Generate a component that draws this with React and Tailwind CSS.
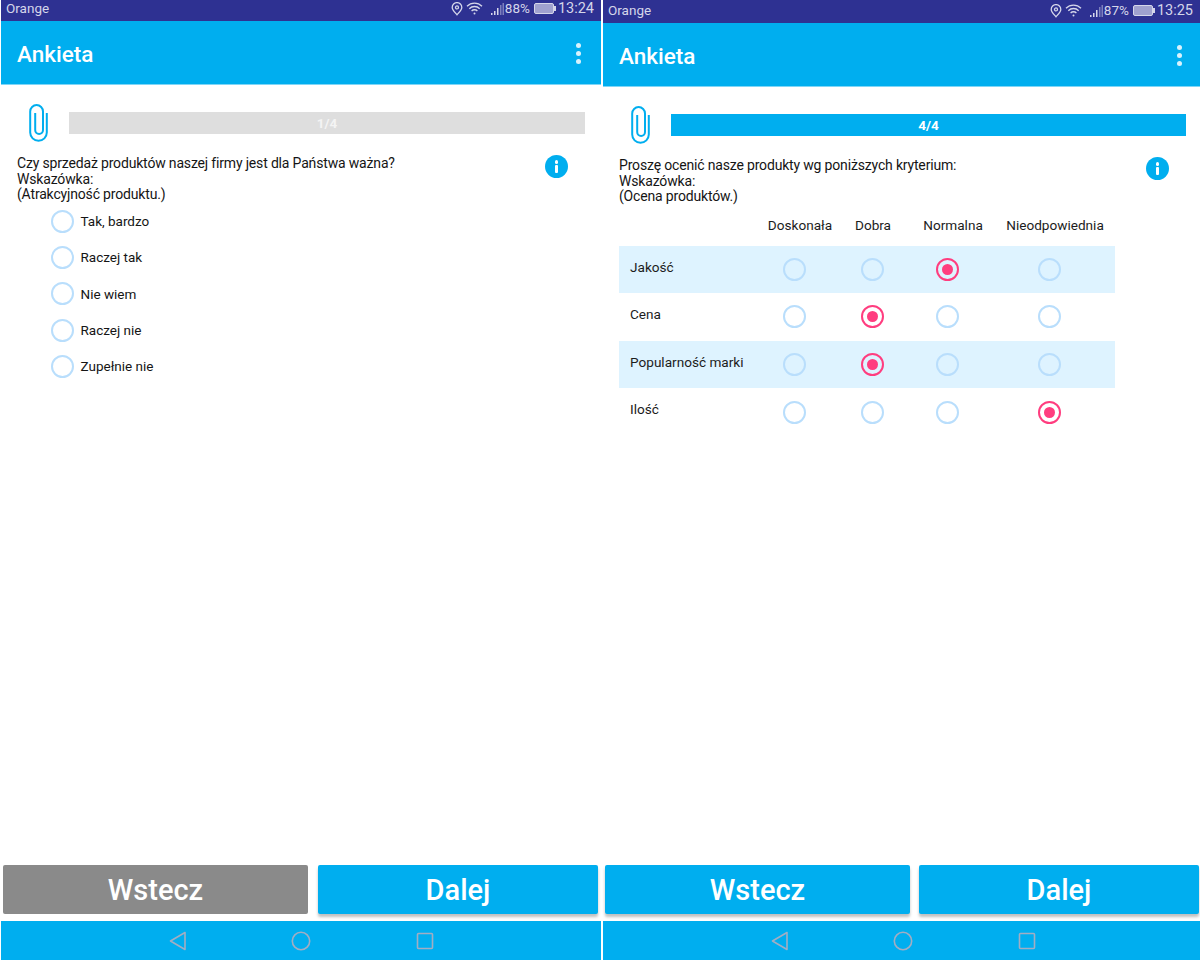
const font = { fontFamily: "Roboto, sans-serif" }

function Clip() {
  return (
    <svg width="19" height="38" viewBox="0 0 19 38" fill="none" stroke="#00aeef" strokeWidth="2" className="shrink-0">
      <path d="M17.8 9V28.5a8.3 8.3 0 0 1-16.6 0V7.5a6.4 6.4 0 0 1 12.8 0V26a3.9 3.9 0 0 1-7.8 0V9" />
    </svg>
  )
}

function Info() {
  return (
    <div className="w-[23px] h-[23px] -mt-px rounded-full bg-[#00aeef] flex flex-col items-center justify-center gap-[1.5px] shrink-0">
      <div className="w-[3.5px] h-[3.5px] rounded-full bg-white"></div>
      <div className="w-[3.5px] h-[8px] rounded-[1px] bg-white"></div>
    </div>
  )
}

function Radio({ on }) {
  if (on) {
    return (
      <div className="w-[23px] h-[23px] rounded-full border-[2.5px] border-[#ff3d7f] flex items-center justify-center">
        <div className="w-[11px] h-[11px] rounded-full bg-[#ff3d7f]"></div>
      </div>
    )
  }
  return <div className="w-[23px] h-[23px] rounded-full border-[2px] border-[#b9defc]"></div>
}

function StatusIcons() {
  return (
    <div className="flex items-center">
      <svg width="12" height="14" viewBox="0 0 12 14" fill="none" stroke="#d5d6ea" strokeWidth="1.3">
        <path d="M6 12.8C3.6 10 1.2 7.8 1.2 5.4a4.8 4.8 0 0 1 9.6 0C10.800 7.800 8.400 10 6 12.800Z" />
        <circle cx="6" cy="5.400" r="1.500" />
      </svg>
      <svg width="17" height="13" viewBox="0 0 17 13" fill="none" stroke="#d5d6ea" strokeWidth="1.3" className="ml-[3px]">
        <path d="M1 4.300a10.500 10.500 0 0 1 15 0M3.300 6.700a7.200 7.200 0 0 1 10.400 0M5.600 9a4 4 0 0 1 5.800 0" />
        <circle cx="8.500" cy="11.500" r="1" fill="#d5d6ea" stroke="none" />
      </svg>
      <svg width="13" height="12" viewBox="0 0 13 12" className="ml-[8px]">
        <rect x="0" y="10" width="1.500" height="2" fill="#d5d6ea" />
        <rect x="3" y="8" width="1.500" height="4" fill="#d5d6ea" />
        <rect x="6" y="5" width="1.500" height="7" fill="#d5d6ea" />
        <rect x="9" y="2" width="1.500" height="10" fill="#7d80bd" />
        <rect x="11.500" y="0" width="1.500" height="12" fill="#7d80bd" />
      </svg>
    </div>
  )
}

function Battery() {
  return (
    <div className="flex items-center ml-[4px]">
      <div className="w-[20px] h-[11px] rounded-[2px] border border-[#d5d6ea] bg-[#9fa1cf]"></div>
      <div className="w-[2px] h-[5px] bg-[#d5d6ea]"></div>
    </div>
  )
}

function NavBar() {
  return (
    <div className="h-[39px] bg-[#00aeef] flex items-center pl-[167px]">
      <svg width="20" height="22" viewBox="0 0 20 22" fill="none" stroke="#a3adc2" strokeWidth="1.600">
        <path d="M17 2.500V19.500L2.500 11Z" strokeLinejoin="round" />
      </svg>
      <svg width="20" height="20" viewBox="0 0 20 20" fill="none" stroke="#a3adc2" strokeWidth="1.600" className="ml-[103px]">
        <circle cx="10" cy="10" r="8.700" />
      </svg>
      <svg width="18" height="18" viewBox="0 0 18 18" fill="none" stroke="#a3adc2" strokeWidth="1.600" className="ml-[105px]">
        <rect x="1.500" y="1.500" width="15" height="15" rx="1" />
      </svg>
    </div>
  )
}

function Phone({ className, statusClass, barRightClass, infoClass, percent, time, step, barClass, barTextClass, question, hint, backClass, footClass, children }) {
  return (
    <div className={"flex flex-col h-[960px] bg-white " + className} style={font}>
      <div className={"bg-[#2e3192] flex items-center justify-between text-[13.5px] text-[#d5d6ea] pl-[5px] pr-[7px] " + statusClass}>
        <span>Orange</span>
        <div className="flex items-center">
          <StatusIcons />
          <span className="ml-[1px]">{percent}</span>
          <Battery />
          <span className="ml-[2px] text-[14.500px]">{time}</span>
        </div>
      </div>
      <div className={"h-[64px] bg-[#00aeef] flex items-center justify-between pl-4 border-b border-[#7fd6f7] " + barRightClass}>
        <span className="text-[22.500px] font-medium text-white pt-[5px]">Ankieta</span>
        <div className="flex flex-col gap-[3px] pt-[1px]">
          <div className="w-[5px] h-[5px] rounded-full bg-[#d8f2fc]"></div>
          <div className="w-[5px] h-[5px] rounded-full bg-[#d8f2fc]"></div>
          <div className="w-[5px] h-[5px] rounded-full bg-[#d8f2fc]"></div>
        </div>
      </div>
      <div className="flex-1">
        <div className="flex items-start pt-[19px] pl-7">
          <Clip />
          <div className={"ml-[21px] mt-2 h-[22px] flex items-center justify-center text-[13.500px] font-bold text-white pt-[1px] " + barClass}>
            <span className={barTextClass}>{step}</span>
          </div>
        </div>
        <div className={"flex justify-between pl-4 mt-[14px] " + infoClass}>
          <div className="text-[14px] leading-[15.500px] tracking-[-0.17px] text-[#151515]">
            <div>{question}</div>
            <div>Wskazówka:</div>
            <div>{hint}</div>
          </div>
          <Info />
        </div>
        {children}
      </div>
      <div className={"flex h-[49px] mb-[7px] pl-[2px] " + footClass}>
        <button className={"w-[305px] rounded-[2px] text-[29px] font-medium text-white pt-[3px] " + backClass}>Wstecz</button>
        <button className="flex-1 rounded-[2px] bg-[#00aeef] text-[29px] font-medium text-white pt-[3px] shadow-[0_3px_3px_rgba(0,0,0,0.25)]">Dalej</button>
      </div>
      <NavBar />
    </div>
  )
}

const options = ["Tak, bardzo", "Raczej tak", "Nie wiem", "Raczej nie", "Zupełnie nie"]

const rows = [
  { name: "Jakość", pick: 2, bg: "bg-[#def3ff]" },
  { name: "Cena", pick: 1, bg: "bg-white" },
  { name: "Popularność marki", pick: 1, bg: "bg-[#def3ff]" },
  { name: "Ilość", pick: 3, bg: "bg-white" },
]

export default function App() {
  return (
    <div className="flex w-[1200px] h-[960px] bg-white overflow-hidden">
      <Phone
        className="w-[600px] ml-px"
        statusClass="h-[21px] pb-1"
        barRightClass="pr-5"
        infoClass="pr-[33px]"
        percent="88%"
        time="13:24"
        step="1/4"
        barClass="w-[516px] bg-[#dedede]"
        barTextClass="text-[#f4f4f4]"
        question="Czy sprzedaż produktów naszej firmy jest dla Państwa ważna?"
        hint="(Atrakcyjność produktu.)"
        backClass="bg-[#8a8a8a]"
        footClass="gap-[10px] pr-[3px]"
      >
        <div className="mt-[0.500px] pl-[50px]">
          {options.map((o) => (
            <div key={o} className="h-[36.300px] flex items-center gap-[6.500px] text-[13.500px] text-[#151515]">
              <Radio />
              <span>{o}</span>
            </div>
          ))}
        </div>
      </Phone>
      <Phone
        className="w-[597px] ml-[2px]"
        statusClass="h-[23px] pb-[2px]"
        barRightClass="pr-[18px]"
        infoClass="pr-[31px]"
        percent="87%"
        time="13:25"
        step="4/4"
        barClass="w-[515px] bg-[#00aeef]"
        barTextClass="text-white"
        question="Proszę ocenić nasze produkty wg poniższych kryterium:"
        hint="(Ocena produktów.)"
        backClass="bg-[#00aeef] shadow-[0_3px_3px_rgba(0,0,0,0.25)]"
        footClass="gap-[9px] pr-[1px]"
      >
        <div className="ml-4 w-[496px] text-[13.600px] text-[#1c1c1c]">
          <div className="grid grid-cols-[141px_80px_66px_94px_110px] h-[41px] items-center text-center">
            <span></span>
            <span>Doskonała</span>
            <span>Dobra</span>
            <span>Normalna</span>
            <span>Nieodpowiednia</span>
          </div>
          {rows.map((r) => (
            <div key={r.name} className={"grid grid-cols-[137px_76px_80px_71px_132px] h-[47.600px] items-center " + r.bg}>
              <span className="pl-[11px] pb-[5px]">{r.name}</span>
              {[0, 1, 2, 3].map((i) => (
                <div key={i} className="flex justify-center">
                  <Radio on={r.pick === i} />
                </div>
              ))}
            </div>
          ))}
        </div>
      </Phone>
    </div>
  )
}
